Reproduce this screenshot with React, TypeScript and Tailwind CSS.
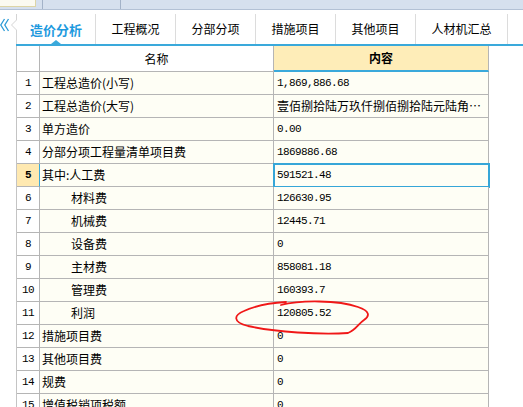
import React from "react";

type Row = { no: number; name: string; value: string; indent?: boolean; cjk?: boolean };

const rows: Row[] = [
  { no: 1, name: "工程总造价(小写)", value: "1,869,886.68" },
  { no: 2, name: "工程总造价(大写)", value: "壹佰捌拾陆万玖仟捌佰捌拾陆元陆角…", cjk: true },
  { no: 3, name: "单方造价", value: "0.00" },
  { no: 4, name: "分部分项工程量清单项目费", value: "1869886.68" },
  { no: 5, name: "其中:人工费", value: "591521.48" },
  { no: 6, name: "材料费", value: "126630.95", indent: true },
  { no: 7, name: "机械费", value: "12445.71", indent: true },
  { no: 8, name: "设备费", value: "0", indent: true },
  { no: 9, name: "主材费", value: "858081.18", indent: true },
  { no: 10, name: "管理费", value: "160393.7", indent: true },
  { no: 11, name: "利润", value: "120805.52", indent: true },
  { no: 12, name: "措施项目费", value: "0" },
  { no: 13, name: "其他项目费", value: "0" },
  { no: 14, name: "规费", value: "0" },
  { no: 15, name: "增值税销项税额", value: "0" },
];

const tabs = [
  { label: "造价分析", w: "w-[79px]" },
  { label: "工程概况", w: "w-[80px]" },
  { label: "分部分项", w: "w-[80px]" },
  { label: "措施项目", w: "w-[80px]" },
  { label: "其他项目", w: "w-[80px]" },
  { label: "人材机汇总", w: "w-[92px]" },
];

const mono = "font-['Liberation_Mono','DejaVu_Sans_Mono',monospace] text-[11px] tracking-[-0.6px]";

export default function App() {
  const selected = 5;

  return (
    <div className="relative w-[523px] h-[407px] overflow-hidden bg-white text-[12px] text-black font-['Noto_Sans_CJK_SC','Noto_Sans',sans-serif] leading-none">
      {/* toolbar strip (cut off) */}
      <div className="flex h-[10px] bg-[#d6e0ee] border-b border-[#b3c1d5]">
        <div className="w-[36px] h-[7px] bg-[#fbfaf1] border-b border-r border-[#ddd5a6]" />
        <div className="w-[6px]" />
        <div className="w-px h-[9px] bg-[#a3b2c8]" />
        <div className="w-[77px]" />
        <div className="w-px h-[9px] bg-[#a3b2c8]" />
      </div>

      {/* tab bar */}
      <div className="flex h-[36px]">
        <div className="w-[17px] shrink-0">
          <svg width="17" height="36" viewBox="0 0 17 36">
            <polyline points="4.5,9 0.8,15 4.5,21" fill="none" stroke="#2a9ad6" strokeWidth="1.3" />
            <polyline points="8.5,9 4.8,15 8.5,21" fill="none" stroke="#2a9ad6" strokeWidth="1.3" />
            <polyline points="16.5,4 16.5,10 11.5,15 16.5,20 16.5,36" fill="none" stroke="#d4d4d4" strokeWidth="1" />
          </svg>
        </div>
        <div className="flex-1 flex flex-col">
          <div className="flex h-[34px] pt-[4px]">
            {tabs.map((t, i) => (
              <div
                key={t.label}
                className={`relative ${t.w} h-[30px] flex items-center justify-center border-r border-[#dcdcdc] ${
                  i === 0 ? "text-[13px] font-bold text-[#1e9ade]" : "text-[12px] text-black"
                }`}
              >
                {t.label}
                {i === 0 && (
                  <div className="absolute bottom-0 left-1/2 -translate-x-1/2 w-0 h-0 border-l-[5px] border-r-[5px] border-b-[4px] border-l-transparent border-r-transparent border-b-[#3aa9db]" />
                )}
              </div>
            ))}
          </div>
          <div className="h-[2px] bg-[#3aa9db] -ml-[1px]" />
        </div>
      </div>

      {/* grid */}
      <div className="flex">
        <div className="w-[17px] shrink-0 border-r border-[#c4c4c4]" />
        <div className="flex flex-col">
          <div className="flex h-[26px]">
            <div className="w-[23px] bg-white border-r border-b border-[#b5b5b5]" />
            <div className="w-[234px] flex items-center justify-center bg-white border-r border-b border-[#b5b5b5]">
              名称
            </div>
            <div className="w-[215px] flex items-center justify-center bg-[#feedb8] border-r border-[#b5b5b5] border-b-2 border-b-[#3aa9db] font-bold">
              内容
            </div>
          </div>

          {rows.map((r) => {
            const sel = r.no === selected;
            return (
              <div key={r.no} className="flex h-[23px]">
                <div
                  className={`w-[23px] flex items-center justify-center border-b border-[#b5b5b5] ${mono} ${
                    sel ? "bg-[#ffe9b1] font-bold border-r border-r-[#3aa9db]" : "bg-white border-r"
                  }`}
                >
                  {r.no}
                </div>
                <div
                  className={`w-[234px] flex items-center bg-[#fefef5] border-r border-b border-[#b5b5b5] ${
                    r.indent ? "pl-[31px]" : "pl-[2px]"
                  }`}
                >
                  {r.name}
                </div>
                <div
                  className={`w-[215px] flex items-center pl-[3px] bg-[#fefef5] border-r border-b border-[#b5b5b5] whitespace-nowrap overflow-hidden ${
                    r.cjk ? "" : mono
                  } ${sel ? "outline-2 outline-[#36a6d8] -outline-offset-1 outline-solid" : ""}`}
                >
                  {r.value}
                </div>
              </div>
            );
          })}
        </div>
      </div>

      {/* hand-drawn red annotation */}
      <svg className="absolute left-0 top-0 pointer-events-none" width="523" height="407" viewBox="0 0 523 407">
        <path
          d="M 281 305 C 300 300, 338 300, 358 307 C 370 311, 370 316, 364 320 C 358 324, 356 330, 348 333 C 320 335, 275 332, 248 326 C 232 322, 234 315, 244 311 C 255 306, 268 303, 286 302"
          fill="none"
          stroke="#f01818"
          strokeWidth="1.8"
          strokeLinecap="round"
        />
      </svg>
    </div>
  );
}
